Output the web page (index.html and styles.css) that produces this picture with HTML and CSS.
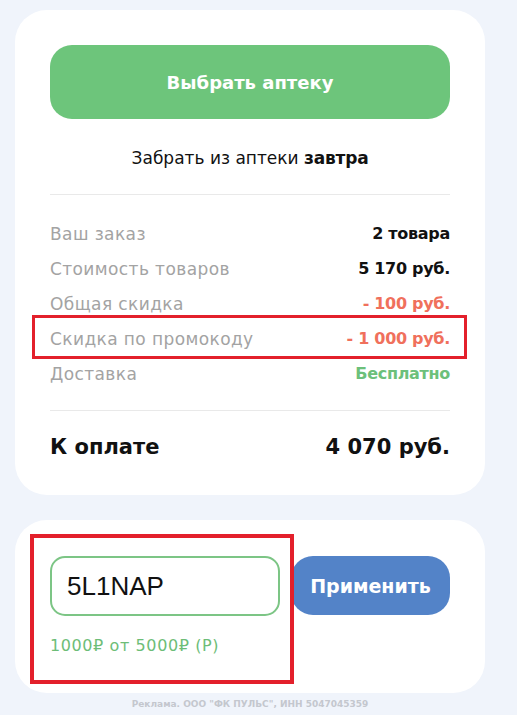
FILE: index.html
```html
<!DOCTYPE html>
<html lang="ru">
<head>
<meta charset="utf-8">
<title>Заказ</title>
<link rel="stylesheet" href="styles.css">
</head>
<body>
<main class="page">
  <section class="card summary">
    <button class="pick-btn">Выбрать аптеку</button>
    <p class="pickup">Забрать из аптеки <b>завтра</b></p>
    <hr class="divider">
    <div class="rows">
      <div class="row"><span class="label">Ваш заказ</span><span class="value">2 товара</span></div>
      <div class="row"><span class="label">Стоимость товаров</span><span class="value">5 170 руб.</span></div>
      <div class="row"><span class="label">Общая скидка</span><span class="value red">- 100 руб.</span></div>
      <div class="row marked"><span class="label">Скидка по промокоду</span><span class="value red">- 1 000 руб.</span></div>
      <div class="row"><span class="label">Доставка</span><span class="value green">Бесплатно</span></div>
    </div>
    <hr class="divider second">
    <div class="total"><span>К оплате</span><span>4 070 руб.</span></div>
  </section>
  <section class="card promo">
    <div class="promo-wrap">
      <div class="promo-row">
        <div class="promo-field">
          <div class="promo-input">5L1NAP</div>
        </div>
        <button class="apply-btn">Применить</button>
      </div>
      <p class="hint">1000₽ от 5000₽ (Р)</p>
    </div>
  </section>
  <p class="ad">Реклама. ООО "ФК ПУЛЬС", ИНН 5047045359</p>
</main>
</body>
</html>
```
FILE: styles.css
```css
* { box-sizing: border-box; }
html, body { margin: 0; padding: 0; }
body {
  background: #f0f4fb;
  font-family: "DejaVu Sans", "Noto Sans", sans-serif;
  color: #111;
}
.page {
  padding: 10px 32px 0 15px;
  display: flex;
  flex-direction: column;
}
.card {
  background: #fff;
  border-radius: 32px;
  width: 470px;
}
.summary {
  padding: 35px 35px 33px;
  display: flex;
  flex-direction: column;
}
.pick-btn {
  height: 74px;
  border: none;
  border-radius: 22px;
  background: #6dc57b;
  color: #fff;
  font-family: inherit;
  font-weight: 700;
  font-size: 18px;
}
.pickup {
  margin: 27px 0 0;
  line-height: 24px;
  text-align: center;
  font-size: 17px;
  color: #111;
}
.pickup b { font-weight: 700; letter-spacing: -0.2px; }
.divider {
  margin: 24px 0 0;
  border: none;
  height: 1px;
  background: #e9e9e9;
}
.divider.second { margin-top: 19px; }
.rows {
  margin-top: 21px;
  display: flex;
  flex-direction: column;
}
.row {
  height: 35px;
  display: flex;
  justify-content: space-between;
  align-items: center;
  font-size: 17px;
  position: relative;
}
.label { color: #a3a3a3; letter-spacing: 0.4px; }
.value { font-weight: 700; color: #111; font-size: 16px; letter-spacing: -0.3px; }
.value.red { color: #f0705c; }
.value.green { color: #6cc07a; }
.row.marked::after {
  content: "";
  position: absolute;
  left: -18px;
  right: -17px;
  top: -6px;
  bottom: -3px;
  border: 3px solid #e3202b;
}
.total {
  margin-top: 21px;
  height: 30px;
  display: flex;
  justify-content: space-between;
  align-items: center;
  font-weight: 700;
  font-size: 21px;
  color: #111;
}
.promo {
  margin-top: 25px;
  padding: 36px 35px 37px;
}
.promo-wrap { position: relative; }
.promo-wrap::after {
  content: "";
  position: absolute;
  left: -20px;
  top: -22px;
  width: 256px;
  height: 142px;
  border: 4px solid #e3202b;
}
.promo-row {
  display: flex;
  gap: 11px;
  height: 60px;
}
.promo-field { width: 230px; }
.promo-input {
  height: 60px;
  border: 2px solid #7cc585;
  border-radius: 15px;
  display: flex;
  align-items: center;
  padding-left: 15px;
  font-family: "Liberation Sans", Arial, sans-serif;
  font-size: 26px;
  color: #111;
}
.apply-btn {
  width: 159px;
  height: 59px;
  border: none;
  border-radius: 22px;
  background: #5383c8;
  color: #fff;
  font-family: inherit;
  font-weight: 700;
  font-size: 19px;
}
.hint {
  margin: 20px 0 0;
  line-height: 20px;
  font-size: 16px;
  letter-spacing: 0.6px;
  color: #6dbd77;
}
.ad {
  margin: 4px 0 0;
  width: 470px;
  text-align: center;
  line-height: 14px;
  font-size: 9px;
  font-weight: 700;
  color: #c4c7ce;
}
```
